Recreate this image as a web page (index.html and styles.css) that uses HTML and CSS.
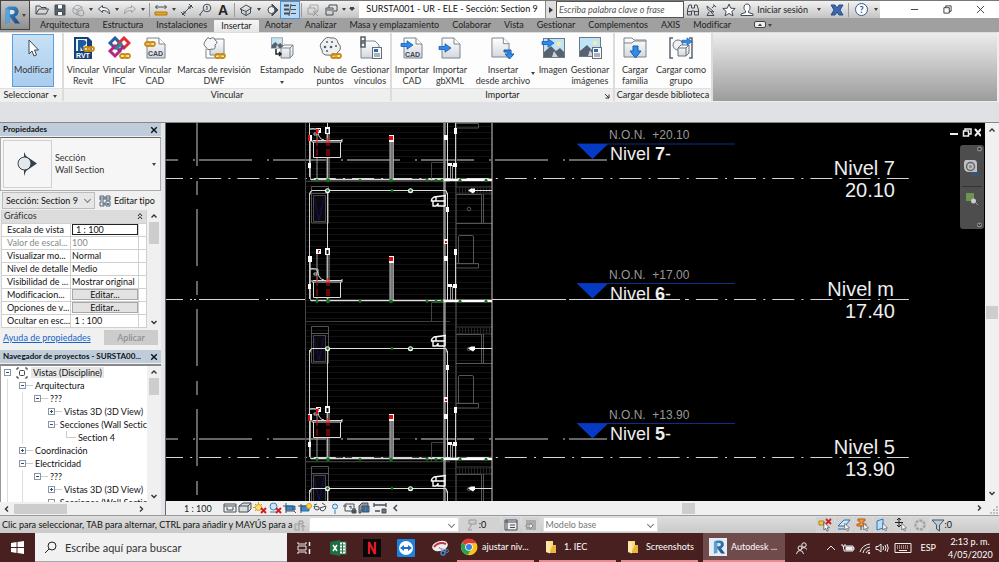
FILE: index.html
```html
<!DOCTYPE html>
<html lang="es">
<head>
<meta charset="utf-8">
<title>SURSTA001 - UR - ELE - Sección: Section 9</title>
<link rel="stylesheet" href="styles.css">
</head>
<body>
<svg class="defs" aria-hidden="true">
  <defs>
    <linearGradient id="rblue" x1="0" y1="0" x2="1" y2="1"><stop offset="0" stop-color="#4a95cf"/><stop offset="1" stop-color="#15487f"/></linearGradient>
    <linearGradient id="sheet" x1="0" y1="0" x2="0" y2="1"><stop offset="0" stop-color="#fff"/><stop offset="1" stop-color="#d4d8dd"/></linearGradient>
    <symbol id="rlogo" viewBox="0 0 20 22"><path d="M3 3L7 1H12C20 1 20 11 14 13L20 21H14L8 13V20L3 21Z" fill="url(#rblue)"/><path d="M8 5H11C15 5 14 10 11 10H8Z" fill="#dce6ef"/><path d="M3 3L8 5V20L3 21Z" fill="#5aa2da"/></symbol>
    <symbol id="chain" viewBox="0 0 12 6"><g fill="none" stroke="#c98a12" stroke-width="1.8"><rect x="1" y="1" width="5.5" height="4" rx="2"/><rect x="5.5" y="1" width="5.5" height="4" rx="2"/></g><path d="M3 3H9" stroke="#f5c242"/></symbol>
    <symbol id="page" viewBox="0 0 20 22"><path d="M1 1H13L19 7V21H1Z" fill="url(#sheet)" stroke="#7b848e"/><path d="M13 1V7H19" fill="#fff" stroke="#7b848e"/></symbol>
    <symbol id="arrow" viewBox="0 0 14 10"><path d="M1 3.5H7V.8L13 5L7 9.2V6.5H1Z" fill="#2d8ceb" stroke="#1a5ba8" stroke-width=".8"/></symbol>
    <symbol id="scene" viewBox="0 0 22 20"><rect x=".5" y=".5" width="21" height="19" fill="#bfe3f7" stroke="#6c7a86"/><circle cx="16" cy="6" r="2.2" fill="#ffe9a0"/><path d="M1 14L8 8L13 13L17 10L21 14V19H1Z" fill="#57626e"/><path d="M9 19L11 13L15 19Z" fill="#cdd3d9"/></symbol>
    <symbol id="card" viewBox="0 0 10 12"><rect x=".5" y=".5" width="9" height="11" fill="#f7f8fa" stroke="#626d79"/><rect x="2" y="2" width="4" height="3" fill="#2b6cb5"/><path d="M2 7H8M2 9H8" stroke="#626d79"/></symbol>
    <symbol id="cursor" viewBox="0 0 8 12"><path d="M1 1V10L3 8L4.5 11.3L6 10.6L4.7 7.5H7.3Z" fill="#fff" stroke="#3a434d" stroke-width=".8"/></symbol>
    <symbol id="plus" viewBox="0 0 7 7"><rect x=".5" y=".5" width="6" height="6" fill="#fff" stroke="#8b96a3"/><path d="M2 3.5H5M3.5 2V5" stroke="#2f4d92"/></symbol>
    <symbol id="minus" viewBox="0 0 7 7"><rect x=".5" y=".5" width="6" height="6" fill="#fff" stroke="#8b96a3"/><path d="M2 3.5H5" stroke="#2f4d92"/></symbol>
    <symbol id="up" viewBox="0 0 8 8"><path d="M1.500 5.500L4 3L6.500 5.500" fill="none" stroke="#333" stroke-width="1.4"/></symbol>
    <symbol id="down" viewBox="0 0 8 8"><path d="M1.500 3L4 5.500L6.500 3" fill="none" stroke="#333" stroke-width="1.4"/></symbol>
    <symbol id="left" viewBox="0 0 8 8"><path d="M5 1.500L2.500 4L5 6.500" fill="none" stroke="#333" stroke-width="1.4"/></symbol>
    <symbol id="right" viewBox="0 0 8 8"><path d="M3 1.500L5.500 4L3 6.500" fill="none" stroke="#333" stroke-width="1.4"/></symbol>
    <symbol id="x" viewBox="0 0 8 8"><path d="M1.200 1.200L6.800 6.800M6.800 1.200L1.200 6.800" fill="none" stroke="currentColor" stroke-width="1.4"/></symbol>
    <symbol id="folder" viewBox="0 0 12 14"><path d="M1 1H8V13L1 12Z" fill="#f8dc83"/><path d="M8 5H11V13H4Z" fill="#e9b73f"/><path d="M1 1L5 3V13.500L1 12Z" fill="#fbe9a9"/></symbol>

    <!-- Fixed architecture, repeated on each storey -->
    <g id="storey">
      <path d="M306 -5.500H450M456 0H492M456 7H492" stroke="#3c3c3c"/>
      <path d="M456 3.500H492" stroke="#262626" stroke-width="6" stroke-dasharray="1 2"/>
      <path d="M311.500 -.5H328.500V36H311.500ZM311 6.500H328M456.500 7.500H481.500V36M456 36.500H492M483.500 7V36" fill="none" stroke="#555"/>
      <rect x="313.500" y="8.500" width="12" height="26" fill="#0a0a0d" stroke="#484848"/>
      <path d="M314 10L319 33L324 10" fill="none" stroke="#10105c"/>
      <circle cx="469" cy="22" r="1.800" fill="none" stroke="#777" stroke-width=".7"/>
      <path d="M458.500 77V49.500Q458.500 48.500 460 48.500H472Q473.500 48.500 473.500 50V76.500M456 76.500H478.500V81H456" fill="none" stroke="#555"/>
      <path d="M431.500 135V115.500H446" fill="none" stroke="#444"/>
    </g>
    <g id="fixtures">
      <path d="M446 8.500L434 10Q431 12 431.500 14H445M433 14V19H436L438 17M445 19H438V16M436 10V14M445 8V19" fill="none" stroke="#fff" stroke-width="1.400"/>
      <path d="M313.500 95H340.500V110.500H313.500Z" fill="#000"/>
      <path d="M313 93.500H342M313.500 95V110.500H340.500V95M342 92V95H312V93M310 82Q317 80 318 86Q319 92 324 93" fill="none" stroke="#ddd"/>
      <path d="M310 82H318V86M314 86h3v2h-3z" fill="none" stroke="#bbb"/>
      <path d="M317 91V99M327 91V99M329 91V99M317 102V109M327 102V109M329 102V109" stroke="#d40d0d"/>
    </g>
    <!-- Electrical risers and outlets, measured from the storey floor -->
    <g id="outlets">
      <path d="M310.500 0V-42M317 -2V-50M327 -2V-50M329 -2V-50M450.500 -1V-15M452.500 -1V-15" stroke="#999"/>
      <rect x="389.500" y="-40" width="4" height="40" fill="#777"/><path d="M390 -40V0M393.500 -40V0" stroke="#bbb" stroke-width=".7"/>
      <path d="M311 -.5H491" stroke="#ddd" stroke-width="1.500"/><path d="M443 0H492" stroke="#fff" stroke-width="2.400"/>
      <path d="M308 -45h4v6h-4zM308 -17h3v5h-3zM389 -45h5v7h-5zM444 -45h4v5h-4zM454 -52h3v6h-3zM448 -17h4v3h-4zM453 -17h4v4h-4zM316 -52h5v5h-5zM325 -53h5v7h-5zM446 -94h3v5h-3zM444 -62h4v5h-4z" fill="#fff"/>
      <path d="M389 -44h4v4h-4zM318 -51h1v3h-1zM445 -60h2v2h-2z" fill="#e20d0d"/>
      <path d="M326.500 -51h2v4h-2zM319 -51h1v1h-1z" fill="#111"/>
      <g fill="#087a10"><circle cx="317" cy=".3" r="1.600"/><circle cx="328" cy=".3" r="2"/><circle cx="360" cy=".3" r="1.500"/><circle cx="391" cy=".3" r="1.900"/><circle cx="427" cy=".3" r="1.500"/><circle cx="436" cy=".3" r="1.500"/><circle cx="442" cy=".3" r="1.500"/><circle cx="460" cy=".3" r="1.500"/><circle cx="486" cy=".3" r="1.500"/></g>
    </g>
    <!-- Ceiling circuit -->
    <g id="ceiling">
      <path d="M310 4Q310 0 313 0H445Q447 0 447 4M473 0H492" fill="none" stroke="#ddd" stroke-width="1.200"/>
      <circle cx="327.500" cy=".3" r="2.500" fill="#fff"/><circle cx="410.500" cy=".3" r="2.500" fill="#fff"/><path d="M468 0l3 -2h4v3l-2 2z" fill="#fff"/>
      <circle cx="327.500" cy="0" r="1.300" fill="#087a10"/><circle cx="392" cy="0" r="1.400" fill="#087a10"/><circle cx="410.500" cy="0" r="1.300" fill="#087a10"/>
    </g>
  </defs>
</svg>

<div class="app">
<header class="top">
  <button class="appbtn" aria-label="Menú de aplicación"><svg width="17" height="22"><use href="#rlogo"/></svg><i class="caret"></i></button>
  <div class="titlebar">
    <div class="qat">
      <button aria-label="Abrir"><svg viewBox="0 0 14 14"><path d="M1 11V3H5L6 4.500H11V6M1 11L4 6H13.500L11 11Z"/></svg></button>
      <button aria-label="Guardar"><svg viewBox="0 0 14 14"><path d="M2 2H12V12H2Z" fill="#59636e"/><path d="M4.500 2V6H9.500V2M4.500 12V8.500H9.500V12" fill="#fff"/></svg></button>
      <button aria-label="Sincronizar" class="dim"><svg viewBox="0 0 14 14"><path d="M2 5L6 2L11 4V9L6 12L2 9ZM2 5L6 7L11 4M6 7V12"/><circle cx="10" cy="10" r="3" fill="#ccc"/></svg></button>
      <i class="caret"></i>
      <button aria-label="Deshacer"><svg viewBox="0 0 14 14"><path d="M1.500 6L5.500 2.500V4.500C10 4.500 12.500 6 12.500 11C10.500 8 8.500 7.500 5.500 7.500V9.500Z" fill="#f4f4f4"/></svg></button>
      <i class="caret"></i>
      <button aria-label="Rehacer" class="dim"><svg viewBox="0 0 14 14"><path d="M12.500 6L8.500 2.500V4.500C4 4.500 1.500 6 1.500 11C3.500 8 5.500 7.500 8.500 7.500V9.500Z"/></svg></button>
      <i class="caret"></i><i class="sep"></i>
      <button aria-label="Medir"><svg viewBox="0 0 14 14"><path d="M1.500 4H12.500M3.500 2L1.500 4L3.500 6M10.500 2L12.500 4L10.500 6"/><path d="M1 9H13V12H1Z" fill="#eaa521" stroke="#b3770b"/></svg></button>
      <i class="caret"></i>
      <button aria-label="Cota alineada"><svg viewBox="0 0 14 14"><path d="M2 12L12 2M1 9L5 13M9 1L13 5M4 8V10H6M8 4H10V6"/></svg></button>
      <button aria-label="Etiqueta"><svg viewBox="0 0 14 14"><circle cx="9" cy="5" r="3.800"/><path d="M9 3V7M8 4L9 3M5.500 7L1.500 12M1.500 12H3"/></svg></button>
      <button aria-label="Texto" class="txt">A</button>
      <i class="sep"></i>
      <button aria-label="Vista 3D"><svg viewBox="0 0 14 14"><path d="M1 6L7 2L12.500 5M2.500 6V10L7 12.500L11.500 10V5M1 6L7 8.500L12.500 5M7 8.500V12.500"/></svg></button>
      <i class="caret"></i>
      <button aria-label="Sección"><svg viewBox="0 0 14 14"><path d="M7 1L13 7L7 13Z" fill="#424c57"/><circle cx="6.500" cy="7" r="3.500" fill="#eee"/></svg></button>
      <button aria-label="Líneas finas" class="on"><svg viewBox="0 0 14 14"><path d="M1 2.500H6M1 6.500H6M1 10.500H6" stroke-width="2"/><path d="M8 2.500H13M8 6.500H13M8 10.500H13M8 1L6 13"/></svg></button>
      <i class="sep"></i>
      <button aria-label="Cerrar ocultas" class="dim"><svg viewBox="0 0 14 14"><path d="M4 5V2H12V8H10M2 5H9V11H2ZM7 8L12 13M12 8L7 13"/></svg></button>
      <button aria-label="Cambiar ventanas"><svg viewBox="0 0 14 14"><path d="M5 5V2H13V8H10M2 5H9V12H2ZM3 7H8"/></svg></button>
      <i class="caret"></i><i class="caret bar"></i>
    </div>
    <h1>SURSTA001 - UR - ELE - Sección: Section 9</h1>
    <button class="expand" aria-label="Expandir"><svg width="4" height="8" viewBox="0 0 4 8"><path d="M0 1L4 4L0 7Z" fill="#333"/></svg></button>
    <input class="find" type="text" placeholder="Escriba palabra clave o frase" aria-label="Buscar ayuda">
    <div class="info">
      <button aria-label="Buscar"><svg viewBox="0 0 14 14"><path d="M1.500 12V7L3 2H5.500V5H8.500V2H11L12.500 7V12H8.500V8H5.500V12ZM1.500 8.500H5.500M8.500 8.500H12.500"/></svg></button>
      <button aria-label="Comunicación"><svg viewBox="0 0 14 14"><path d="M3 3Q3 9 10 9L3 3M5 9L3 12.500H10L7 9M8 5L11 2M9 1.500L12 4"/></svg></button>
      <button aria-label="Favoritos"><svg viewBox="0 0 14 14"><path d="M7 1L8.700 5.200L13.200 5.500L9.800 8.400L11 12.800L7 10.400L3 12.800L4.200 8.400L.8 5.500L5.300 5.200Z" fill="#fff"/></svg></button>
      <button class="login"><svg viewBox="0 0 14 14"><path d="M7 1C3 1 3.500 7 5.500 8V9.500L1 11V12.500H13V11L8.500 9.500V8C10.500 7 11 1 7 1Z" fill="#fff"/></svg>Iniciar sesión</button>
      <i class="caret wide"></i>
      <button aria-label="Exchange"><svg viewBox="0 0 14 14"><path d="M1 2H5L7 5L9 2H13L10 7L13 12H9L7 9L5 12H1L4 7Z" fill="#3e69ad" stroke="#294d87"/></svg></button>
      <i class="sep"></i>
      <button aria-label="Ayuda" class="help">?</button>
      <i class="caret"></i>
    </div>
    <div class="win">
      <button aria-label="Minimizar"><svg viewBox="0 0 10 10"><path d="M1 5H9"/></svg></button>
      <button aria-label="Restaurar"><svg viewBox="0 0 10 10"><path d="M3 3V1H9V7H7M1 3H7V9H1Z"/></svg></button>
      <button aria-label="Cerrar"><svg viewBox="0 0 10 10"><path d="M1 1L9 9M9 1L1 9"/></svg></button>
    </div>
  </div>
  <nav class="tabs">
    <a href="#">Arquitectura</a><a href="#">Estructura</a><a href="#">Instalaciones</a><a href="#" class="active">Insertar</a><a href="#">Anotar</a><a href="#">Analizar</a><a href="#">Masa y emplazamiento</a><a href="#">Colaborar</a><a href="#">Vista</a><a href="#">Gestionar</a><a href="#">Complementos</a><a href="#">AXIS</a><a href="#">Modificar</a>
    <button class="ribtoggle" aria-label="Minimizar cinta"><svg width="12" height="8" viewBox="0 0 12 8"><rect x=".5" y=".5" width="11" height="6" rx="1.500" fill="#eee" stroke="#444"/><path d="M4 5L6 2.500L8 5Z" fill="#333"/></svg></button><i class="caret"></i>
  </nav>
</header>

<section class="ribbon">
  <div class="panel p-sel">
    <div class="tools"><button class="tool pressed"><svg viewBox="0 0 24 24"><path d="M8 4V18L11 15L13 20L15.500 19L13.500 14H17.500Z" fill="#fff" stroke="#3d4752"/></svg><span>Modificar</span></button></div>
    <footer>Seleccionar <i class="caret"></i></footer>
  </div>
  <div class="panel p-link">
    <div class="tools">
      <button class="tool w36"><svg viewBox="0 0 24 24"><path d="M3 1H17L21 5V23H3Z" fill="#173f78"/><path d="M5 3H16V15H5Z" fill="#e9f1f9"/><path d="M7 4H12C17 4 16 10 12 10L15 15H12L9.500 11V15H7Z" fill="#1c5aa0"/><text x="5" y="21.500" class="t6 inv">RVT</text><use href="#chain" x="12" y="10" width="12" height="6"/></svg><span>Vincular<br>Revit</span></button>
      <button class="tool w36"><svg viewBox="0 0 24 24"><g fill="none" stroke-width="3"><path d="M3 7L8 2L13 7L8 12Z" stroke="#2a5e9d"/><path d="M12 7L17 2L22 7L17 12Z" stroke="#e0313b"/><path d="M3 15L8 10L13 15L8 20Z" stroke="#b72680"/><path d="M9 13L15 7" stroke="#2b8b9b"/><path d="M12 15L17 10" stroke="#8b3191"/></g><use href="#chain" x="12" y="17" width="12" height="6"/></svg><span>Vincular<br>IFC</span></button>
      <button class="tool w36"><svg viewBox="0 0 24 24"><use href="#page" x="3" y="1" width="20" height="22"/><text x="5" y="20" class="t6">CAD</text><use href="#chain" x="1" y="5" width="12" height="6"/></svg><span>Vincular<br>CAD</span></button>
      <button class="tool w82"><svg viewBox="0 0 24 24"><path d="M8 3H22V19H8Z" fill="url(#sheet)" stroke="#7b848e"/><path d="M4 4Q6 0 8 3Q12 0 13 4Q17 6 13 9Q14 14 10 13Q5 15 4 11Q0 9 4 4Z" fill="#f5f6f8" stroke="#69737e"/><path d="M4 13V22H16" fill="none" stroke="#7b848e"/><use href="#chain" x="12" y="17" width="12" height="6"/></svg><span>Marcas de revisión<br>DWF</span></button>
      <button class="tool w54"><svg viewBox="0 0 24 24"><use href="#scene" x="1" y="1" width="12" height="12"/><path d="M11 12L14 9H23V19L20 22H11Z" fill="url(#sheet)" stroke="#7b848e"/><path d="M11 12H20V22M20 12L23 9" fill="none" stroke="#7b848e"/><path d="M6 13V18H11M9 16L11 18L9 20" fill="none" stroke="#222" stroke-width="1.500"/></svg><span>Estampado<br><i class="caret"></i></span></button>
      <button class="tool w42"><svg viewBox="0 0 24 24"><path d="M5 5Q8 0 13 2Q19 1 20 7Q25 12 20 16Q16 22 11 19Q4 20 4 14Q0 9 5 5Z" fill="#eef0f2" stroke="#626c77"/><g fill="#555f69"><circle cx="9" cy="6" r="1"/><circle cx="14" cy="6" r="1"/><circle cx="7" cy="11" r="1.300"/><circle cx="13" cy="11" r="1.300"/><circle cx="18" cy="10" r="1"/><circle cx="9" cy="15" r="1"/></g><use href="#chain" x="12" y="17" width="12" height="6"/></svg><span>Nube de<br>puntos</span></button>
      <button class="tool w38"><svg viewBox="0 0 24 24"><path d="M3 22V5H17L21 9V22Z" fill="url(#sheet)" stroke="#7b848e"/><path d="M3 1H7V7H3ZM3 5H7V11H3Z" fill="none" stroke="#555f69" stroke-width="1.500"/><use href="#card" x="14" y="11" width="10" height="12"/></svg><span>Gestionar<br>vínculos</span></button>
    </div>
    <footer>Vincular</footer>
  </div>
  <div class="panel p-imp">
    <div class="tools">
      <button class="tool w38"><svg viewBox="0 0 24 24"><use href="#page" x="3" y="1" width="20" height="22"/><text x="5" y="21" class="t6">CAD</text><use href="#arrow" x="0" y="4" width="14" height="10"/></svg><span>Importar<br>CAD</span></button>
      <button class="tool w38"><svg viewBox="0 0 24 24"><use href="#page" x="3" y="1" width="20" height="22"/><use href="#arrow" x="0" y="7" width="14" height="10"/></svg><span>Importar<br>gbXML</span></button>
      <button class="tool w68"><svg viewBox="0 0 24 24"><use href="#page" x="0" y="1" width="19" height="21"/><path d="M13 14H20V18H23L18.500 23L14 18H17V16H13Z" fill="#2d8ceb" stroke="#1a5ba8"/></svg><span>Insertar<br>desde archivo</span><i class="caret corner"></i></button>
      <button class="tool w32"><svg viewBox="0 0 24 24"><use href="#scene" x="2" y="2" width="22" height="20"/><use href="#arrow" x="0" y="2" width="14" height="10"/></svg><span>Imagen</span></button>
      <button class="tool w42"><svg viewBox="0 0 24 24"><use href="#scene" x="1" y="1" width="22" height="20"/><use href="#card" x="14" y="11" width="10" height="12"/></svg><span>Gestionar<br>imágenes</span></button>
    </div>
    <footer>Importar<svg class="launch" viewBox="0 0 6 6"><path d="M1 1L5 5M5 1.500V5H1.500" fill="none" stroke="#333"/></svg></footer>
  </div>
  <div class="panel p-load">
    <div class="tools">
      <button class="tool w38"><svg viewBox="0 0 24 24"><path d="M1 21V2H9L11 4H23V21Z" fill="url(#sheet)" stroke="#7b848e"/><path d="M1 7H9L11 5H23" fill="none" stroke="#7b848e"/><path d="M10 10H15V15H18L12.500 22L7 15H10Z" fill="#2d8ceb" stroke="#1a5ba8"/></svg><span>Cargar<br>familia</span></button>
      <button class="tool w54"><svg viewBox="0 0 24 24"><path d="M4 2H1V22H4M20 2H23V22H20" fill="none" stroke="#59636e" stroke-width="1.500"/><circle cx="9" cy="9" r="5" fill="#eef0f2" stroke="#6a747f"/><path d="M9 12L12 9H20V17L17 20H9Z" fill="url(#sheet)" stroke="#6a747f"/><path d="M9 12H17V20M17 12L20 9" fill="none" stroke="#6a747f"/><use href="#arrow" x="12" y="1" width="12" height="9"/></svg><span>Cargar como<br>grupo</span></button>
    </div>
    <footer>Cargar desde biblioteca</footer>
  </div>
</section>
<div class="options"></div>

<main class="work">
  <aside class="side">
    <section class="props">
      <header class="dock"><h2>Propiedades</h2><button aria-label="Cerrar propiedades"><svg width="8" height="8"><use href="#x"/></svg></button></header>
      <button class="type"><span class="thumb"><svg width="22" height="26" viewBox="0 0 22 26"><path d="M7 1L9 5L20 12.500L9 20L7 25Z" fill="#34404b"/><circle cx="7.500" cy="12.500" r="6.500" fill="#e4e8ed" stroke="#34404b"/></svg></span><span class="tname">Sección<br>Wall Section</span><i class="caret"></i></button>
      <div class="inst">
        <span class="pick"><select aria-label="Instancia"><option>Sección: Section 9</option></select></span>
        <button><svg width="12" height="12" viewBox="0 0 12 12"><path d="M1 1H5V5H1ZM7 1H11V5H7ZM1 7H5V11H1ZM1 3H11M3 9H7M7 6H11V11H7Z" fill="#e8f1fa" stroke="#56616d"/><path d="M8 8H10V10H8Z" fill="#2d7fd0"/></svg>Editar tipo</button>
      </div>
      <div class="gridwrap">
        <table class="grid">
          <thead><tr><th colspan="3" scope="colgroup">Gráficos<svg viewBox="0 0 6 8"><path d="M1 4L3 1.500L5 4M1 7L3 4.500L5 7" fill="none" stroke="#222"/></svg></th></tr></thead>
          <tbody>
            <tr><td>Escala de vista</td><td><input value="1 : 100" aria-label="Escala de vista"></td><td></td></tr>
            <tr class="off"><td>Valor de escal...</td><td>100</td><td></td></tr>
            <tr><td>Visualizar mo...</td><td>Normal</td><td></td></tr>
            <tr><td>Nivel de detalle</td><td>Medio</td><td></td></tr>
            <tr><td>Visibilidad de ...</td><td>Mostrar original</td><td></td></tr>
            <tr><td>Modificacion...</td><td><button>Editar...</button></td><td></td></tr>
            <tr><td>Opciones de v...</td><td><button>Editar...</button></td><td></td></tr>
            <tr><td>Ocultar en esc...</td><td>&nbsp;1 : 100</td><td></td></tr>
          </tbody>
        </table>
        <div class="vscroll"><svg><use href="#up"/></svg><i class="thumbv"></i><svg><use href="#down"/></svg></div>
      </div>
      <div class="apply"><a href="#">Ayuda de propiedades</a><button disabled>Aplicar</button></div>
    </section>
    <section class="nav">
      <header class="dock"><h2>Navegador de proyectos - SURSTA00...</h2><button aria-label="Cerrar navegador"><svg width="8" height="8"><use href="#x"/></svg></button></header>
      <div class="treewrap">
        <ul class="tree">
          <li class="l0"><svg><use href="#minus"/></svg><svg class="vi" viewBox="0 0 12 12"><path d="M3 1H1V3M9 1H11V3M1 9V11H3M11 9V11H9" fill="none" stroke="#333"/><rect x="3.500" y="3.500" width="5" height="5" rx="1" fill="#fff" stroke="#444"/></svg><span class="sel">Vistas (Discipline)</span></li>
          <li class="l1"><svg><use href="#minus"/></svg><i></i><span>Arquitectura</span></li>
          <li class="l2"><svg><use href="#minus"/></svg><i></i><span>???</span></li>
          <li class="l3"><svg><use href="#plus"/></svg><i></i><span>Vistas 3D (3D View)</span></li>
          <li class="l3"><svg><use href="#minus"/></svg><i></i><span>Secciones (Wall Sectic</span></li>
          <li class="l4"><i></i><span>Section 4</span></li>
          <li class="l1"><svg><use href="#plus"/></svg><i></i><span>Coordinación</span></li>
          <li class="l1"><svg><use href="#minus"/></svg><i></i><span>Electricidad</span></li>
          <li class="l2"><svg><use href="#minus"/></svg><i></i><span>???</span></li>
          <li class="l3"><svg><use href="#plus"/></svg><i></i><span>Vistas 3D (3D View)</span></li>
          <li class="l3"><svg><use href="#minus"/></svg><i></i><span>Secciones (Wall Sectic</span></li>
        </ul>
        <div class="vscroll"><svg><use href="#up"/></svg><i class="thumbv short"></i><svg><use href="#down"/></svg></div>
      </div>
      <div class="hscroll"><svg><use href="#left"/></svg><i></i><svg><use href="#right"/></svg></div>
    </section>
  </aside>

  <section class="view">
    <div class="viewtop">
      <div class="stage">
        <svg class="drawing" viewBox="166 123 819 378" role="img" aria-label="Sección de edificio con niveles">
          <defs><pattern id="courses" width="8" height="6" patternUnits="userSpaceOnUse"><path d="M0 .5H8" stroke="#121212"/></pattern></defs>
          <rect x="306" y="123" width="186" height="378" fill="url(#courses)"/>
          <path d="M197 109V501" stroke="#858585" stroke-width="1.500" stroke-dasharray="57 15 14 14"/>
          <path d="M125 160H607" stroke="#8a8a8a" stroke-width="1.500" stroke-dasharray="53 15 2 4"/>
          <path d="M125 439H607" stroke="#ccc" stroke-dasharray="53 15 2 4"/>
          <g stroke="#d5d5d5" stroke-dasharray="22 7.200 2 7"><path d="M161 178.500H909"/><path d="M161 457.500H909"/><path d="M619.500 299.500H909"/></g>
          <path d="M166 299.500H183M190 299.500H192M194 299.500H196M199 299.500H259M266 299.500H268M270 299.500H306M492 299.500H566M569 299.500H680M685 299.500H687" stroke="#d5d5d5"/>
          <path d="M305.500 123V501" stroke="#444"/><path d="M456 123V501" stroke="#333" stroke-width="2"/>
          <use href="#storey" y="47"/><use href="#storey" y="187"/><use href="#storey" y="327"/><use href="#storey" y="467"/>
          <path d="M309.500 123V177M309.500 193V299M309.500 350V457M309.500 490V501M327.500 123V179M327.500 190V300M327.500 348V458M327.500 488V501M455.500 123V179M455.500 252V300M455.500 408V458" stroke="#ccc"/>
          <path d="M447.500 123V179M447.500 193V300M447.500 351V458M447.500 491V501" stroke="#ddd"/>
          <path d="M444.500 123V501" stroke="#8c8c8c" stroke-width="2.500"/>
          <path d="M492 123V501" stroke="#ccc"/>
          <use href="#outlets" y="180"/><use href="#outlets" y="301"/><use href="#outlets" y="459"/>
          <use href="#ceiling" y="190.500"/><use href="#ceiling" y="348.500"/><use href="#ceiling" y="488.500"/>
          <use href="#fixtures" y="47"/><use href="#fixtures" y="187"/><use href="#fixtures" y="327"/><use href="#fixtures" y="467"/>
          <path d="M308 135h2v6h-2zM308 415h2v6h-2zM316 129h2v5h-2zM316 409h2v5h-2z" fill="#e20d0d"/>
          <g stroke="#0c2e88"><path d="M577 144H735M577 283.500H735M577 423.500H735"/></g>
          <path d="M577 144H608L592.500 159ZM577 283.500H608L592.500 298.500ZM577 423.500H608L592.500 438.500Z" fill="#053bc4"/>
          <g class="elev"><text x="609" y="138.500">N.O.N.&#160; +20.10</text><text x="609" y="278.500">N.O.N.&#160; +17.00</text><text x="609" y="418.500">N.O.N.&#160; +13.90</text></g>
          <g class="lvl"><text x="610" y="160">Nivel <tspan>7</tspan>-</text><text x="610" y="300">Nivel <tspan>6</tspan>-</text><text x="610" y="440">Nivel <tspan>5</tspan>-</text></g>
          <g class="lvlr"><text x="895" y="174.500">Nivel 7</text><text x="895" y="196.500">20.10</text><text x="894" y="296">Nivel m</text><text x="895" y="318">17.40</text><text x="895" y="453.500">Nivel 5</text><text x="895" y="475.500">13.90</text></g>
        </svg>
        <div class="mdi"><svg width="31" height="9" viewBox="0 0 31 9"><path d="M0 6H8" stroke="#eee" stroke-width="2"/><path d="M15 3V1H21V6H19M13.500 3H18.500V8H13.500Z" fill="none" stroke="#eee" stroke-width="1.500"/><path d="M25 1L31 8M31 1L25 8" stroke="#eee" stroke-width="2"/></svg></div>
        <div class="navbar"><svg width="24" height="84" viewBox="0 0 24 84"><rect width="24" height="84" rx="3" fill="#4d4d4d"/><circle cx="19.500" cy="4" r="2.500" fill="#888"/><path d="M18.500 3L20.500 5M20.500 3L18.500 5" stroke="#222"/><path d="M6 15H14Q17 15 17 19V27H9Q4 27 4 22V19Q4 15 6 15Z" fill="#bfc1c4"/><circle cx="10.500" cy="21.500" r="4" fill="none" stroke="#666" stroke-width="1.500"/><circle cx="10.500" cy="21.500" r="1.500" fill="#888"/><text x="12" y="31" class="t2d">2D</text><path d="M2 41.500H22" stroke="#333"/><rect x="6" y="48" width="8" height="8" fill="#6a944f"/><circle cx="13.500" cy="56" r="2.500" fill="#ccc"/><path d="M15 57L18 60" stroke="#999"/><circle cx="19.500" cy="80" r="2.500" fill="#888"/><path d="M18 79L19.500 81L21 79" fill="none" stroke="#222"/></svg></div>
      </div>
      <div class="vscroll main"><svg><use href="#up"/></svg><i class="thumbv mid"></i><svg><use href="#down"/></svg></div>
    </div>
    <div class="viewbar">
      <span class="scale">1 : 100</span>
      <div class="vicons">
        <svg viewBox="0 0 14 12"><path d="M1 2H13V10H1ZM1 4H13M4 5V8H10V5" /></svg>
        <svg viewBox="0 0 14 12"><path d="M1 4L5 1H13V7L10 10H1ZM1 4H10V10M10 4L13 1" fill="#ddd"/></svg>
        <svg viewBox="0 0 14 12"><circle cx="5.500" cy="5.500" r="3" fill="#ffe27a" stroke="#d99a12"/><path d="M5.500 0V2M0 5.500H2M2 2L3 3M9 2L8 3M2 9L3 8" stroke="#d99a12"/><path d="M8 6L13 11M13 6L8 11" stroke="#d11f1f" stroke-width="2"/></svg>
        <svg viewBox="0 0 14 12"><circle cx="5.500" cy="4.500" r="3.500" fill="#cfe6f8" stroke="#3d7fb8"/><path d="M2 10H8" stroke="#3d7fb8"/><path d="M8 6L13 11M13 6L8 11" stroke="#d11f1f" stroke-width="2"/></svg>
        <svg viewBox="0 0 14 12"><path d="M3 4H12V8H3Z" fill="#3d88cf" stroke="#2b6cb0"/><path d="M0 4H10V8M3 1V11M3 9H11"/><path d="M11 9L13 11" stroke="#d11f1f"/></svg>
        <svg viewBox="0 0 14 12"><path d="M3 4H11V9H3Z" fill="#3d88cf" stroke="#2b6cb0"/><path d="M0 4H10M3 2V11"/><circle cx="11" cy="4" r="2.500" fill="#ffd94e" stroke="#d99a12"/></svg>
        <svg viewBox="0 0 14 12"><path d="M1 3L4 2M9 1L12 3M1 4Q1 8 4 8Q7 8 6 5ZM7 6Q7 9 10 9Q13 8 13 4Z"/></svg>
        <svg viewBox="0 0 14 12"><circle cx="7" cy="4.500" r="2.500" fill="#d6ebfa" stroke="#2e7cc0"/><path d="M6 9H8M6 11H8" stroke="#2e7cc0"/></svg>
        <svg viewBox="0 0 14 12"><path d="M2 2H11V9H2ZM0 4H4M9 7H13M6 5L8 4V7"/><path d="M9 8H13V11H9Z" fill="#555"/></svg>
        <svg viewBox="0 0 14 12"><path d="M1 4L4 1H10V8H3V11H1Z" fill="#999"/><path d="M4 4H11V10H4Z" fill="#3d88cf"/><path d="M6 4V10M9 4V10"/></svg>
        <svg viewBox="0 0 14 12"><path d="M1 1V5M13 1V5M1 3H13M2 9H7" stroke-width="1.300"/><path d="M9 7H13V11H9Z" fill="#777"/></svg>
        <svg viewBox="0 0 14 12"><path d="M9 3L6 6L9 9" stroke-width="1.500"/></svg>
      </div>
      <div class="htrack"><i></i></div>
      <svg class="harrow" width="8" height="8"><use href="#right"/></svg>
      <svg width="12" height="12" viewBox="0 0 12 12"><path d="M9 5h2M6 8h2M9 8h2M3 11h2M6 11h2M9 11h2" stroke="#b0b0b0" stroke-width="1.500"/></svg>
    </div>
  </section>
</main>

<div class="status">
  <p>Clic para seleccionar, TAB para alternar, CTRL para añadir y MAYÚS para a</p>
  <svg class="worksets" viewBox="0 0 14 14"><path d="M1 6H5V12H1ZM5 3H9V6H5ZM9 13V7M7 9L9 7L11 9" fill="#ccc" stroke="#999"/></svg>
  <span class="pick ws"><select aria-label="Subproyecto"><option></option></select></span>
  <span class="cell"><svg viewBox="0 0 14 14"><path d="M4 2H11V6H4ZM7 6L3 12H7" fill="#ccc" stroke="#999"/></svg>:0</span>
  <button class="cell sq" aria-label="Opciones de diseño"><svg viewBox="0 0 14 14"><path d="M1 2H13V12H1ZM1 4H13M3 2V12M6 7H11M6 9.500H11" fill="#eee" stroke="#424b55"/></svg></button>
  <button class="cell sq" aria-label="Excluir opciones"><svg viewBox="0 0 14 14"><path d="M2 2H12V12H2Z" fill="#aaa"/><path d="M2 7H6V5L9 8L6 11V9H2Z" fill="#eee" stroke="#888"/></svg></button>
  <span class="pick dm"><select aria-label="Opción de diseño"><option>Modelo base</option></select></span>
  <div class="sels">
    <button class="cell" aria-label="Seleccionar vínculos"><svg viewBox="0 0 14 14"><path d="M1 3H6V7H1Z" fill="#f0c23d" stroke="#b98312"/><path d="M8 1L13 6M13 1L8 6" stroke="#d11f1f" stroke-width="1.800"/><use href="#cursor" x="5" y="3" width="7" height="11"/></svg></button>
    <button class="cell" aria-label="Seleccionar base"><svg viewBox="0 0 14 14"><path d="M1 8L7 2H13L8 8ZM1 11H7" fill="#d4e7f8" stroke="#2c6db0"/><use href="#cursor" x="7" y="4" width="6" height="10"/></svg></button>
    <button class="cell" aria-label="Seleccionar bloqueados"><svg viewBox="0 0 14 14"><path d="M2 1H9V3H7V6H10V8H1V6H4V3H2Z" fill="#f29a3d" stroke="#b85d12"/><path d="M5 8V12" stroke="#555"/><use href="#cursor" x="7" y="4" width="6" height="10"/></svg></button>
    <button class="cell" aria-label="Seleccionar por cara"><svg viewBox="0 0 14 14"><path d="M2 3L8 1V10L2 12Z" fill="#b9dcf7" stroke="#2678c0"/><use href="#cursor" x="7" y="4" width="6" height="10"/></svg></button>
    <button class="cell" aria-label="Arrastrar"><svg viewBox="0 0 14 14"><path d="M5 0V9M1 4.500H9" stroke="#222"/><path d="M3 2L5 0L7 2M3 7L5 9L7 7" fill="none" stroke="#222"/><use href="#cursor" x="7" y="4" width="6" height="10"/></svg></button>
    <button class="cell" aria-label="Procesos"><svg viewBox="0 0 14 14"><circle cx="7" cy="7" r="4.500" fill="none" stroke="#a5a5a5" stroke-width="2.500" stroke-dasharray="3 1"/></svg></button>
    <button class="flt"><svg viewBox="0 0 14 14"><path d="M1 2H13L8.500 7V13L5.500 11V7Z" fill="#b9cad9" stroke="#46525e"/></svg>:0</button>
  </div>
</div>

<footer class="taskbar">
  <button class="start" aria-label="Inicio"><svg width="13" height="13" viewBox="0 0 13 13"><path d="M0 2L5.500 1V6H0ZM6.500 1L13 0V6H6.500ZM0 7H5.500V12L0 11ZM6.500 7H13V13L6.500 12Z" fill="#fff"/></svg></button>
  <label class="search"><svg width="13" height="13" viewBox="0 0 13 13"><circle cx="8" cy="5" r="4" fill="none" stroke="#222"/><path d="M5 8L1 12" stroke="#222"/></svg><input placeholder="Escribe aquí para buscar" aria-label="Buscar en Windows"></label>
  <div class="pins">
    <button aria-label="Vista de tareas"><svg viewBox="0 0 18 18"><path d="M3 3V5H11V3M3 15V13H11V15M3 7H11V11H3Z" fill="none" stroke="#eee"/><path d="M14.500 3V7M14.500 10V15" stroke="#eee" stroke-width="1.500"/></svg></button>
    <button aria-label="Excel"><svg viewBox="0 0 18 18"><rect x="9" y="3" width="8" height="12" fill="#fff" stroke="#217346"/><path d="M11 6H16M11 9H16M11 12H16M13.500 4V14" stroke="#217346"/><path d="M1 3L11 1V17L1 15Z" fill="#1d7044"/><path d="M4 6L8 12M8 6L4 12" stroke="#fff" stroke-width="1.500"/></svg></button>
    <button aria-label="Netflix"><svg viewBox="0 0 18 18"><rect width="18" height="18" fill="#080808"/><path d="M6 15V3L12 15V3" fill="none" stroke="#e01b24" stroke-width="2.200"/></svg></button>
    <button aria-label="TeamViewer"><svg viewBox="0 0 18 18"><rect width="18" height="18" rx="1" fill="#1a82e0"/><circle cx="9" cy="9" r="7" fill="#fff"/><path d="M3 9L7 6V8H11V6L15 9L11 12V10H7V12Z" fill="#1a72cc"/></svg></button>
    <button aria-label="Recortes"><svg viewBox="0 0 18 18"><ellipse cx="9" cy="7" rx="8" ry="5" fill="#eee" transform="rotate(-15 9 7)"/><path d="M3 8Q8 2 15 5" stroke="#c8333d" stroke-width="2" fill="none"/><circle cx="12" cy="14" r="2" fill="none" stroke="#3d8cd6" stroke-width="1.500"/><circle cx="16" cy="12" r="1.500" fill="none" stroke="#3d8cd6"/><path d="M12 12L8 8M15 11L8 9" stroke="#999"/></svg></button>
  </div>
  <div class="tasks">
    <button><svg viewBox="0 0 18 18"><circle cx="9" cy="9" r="8" fill="#fff"/><path d="M9 9L2 5A8 8 0 0 1 16.500 5.500H9Z" fill="#e33b2e"/><path d="M9 9L2 5A8 8 0 0 0 8 17L12 11Z" fill="#2ba24c"/><path d="M9 5.500H16.500A8 8 0 0 1 8 17L12.500 9Z" fill="#fbc116"/><circle cx="9" cy="9" r="3.800" fill="#fff"/><circle cx="9" cy="9" r="3" fill="#3f7de8"/></svg><span>ajustar niv...</span></button>
    <button><svg viewBox="0 0 18 18"><use href="#folder" x="3" y="2" width="12" height="14"/></svg><span>1. IEC</span></button>
    <button><svg viewBox="0 0 18 18"><use href="#folder" x="3" y="2" width="12" height="14"/></svg><span>Screenshots</span></button>
    <button class="cur"><svg viewBox="0 0 18 18"><rect width="18" height="18" fill="#e6ecf3"/><use href="#rlogo" x="3" y="1" width="13" height="16"/></svg><span>Autodesk ...</span></button>
  </div>
  <div class="tray">
    <svg viewBox="0 0 14 14"><circle cx="9" cy="4" r="2.200"/><path d="M6 8Q9 5 12 8.500"/><circle cx="5" cy="7" r="2"/><path d="M1.500 13Q2 9.500 5 9.500Q8 9.500 8.500 13"/></svg>
    <svg class="chev" viewBox="0 0 14 14"><path d="M3 9L7 5L11 9"/></svg>
    <svg viewBox="0 0 14 14"><path d="M4 5H12V10H3V8M12 6.500H13V8.500H12M1 3V5H4V3M2.500 5V8"/><path d="M5 6H11V9H5Z" fill="#eee"/></svg>
    <svg viewBox="0 0 14 14"><path d="M2 11Q4 4 12 3M5 12Q6 7 12 6M8 12Q9 9 12 9"/><circle cx="11" cy="12" r=".8" fill="#fff"/></svg>
    <svg viewBox="0 0 14 14"><path d="M1 5.500H3L6 3V11L3 8.500H1ZM8 5Q9 7 8 9M10 4Q12 7 10 10M12 3Q14.500 7 12 11"/></svg>
    <svg class="kb" viewBox="0 0 18 12"><path d="M1 1.500H17V10.500H1Z"/><path d="M3 4H15M3 6H15" stroke-dasharray="1 1"/><path d="M5 8.500H13"/></svg>
    <span>ESP</span>
    <time>2:13 p. m.<br>4/05/2020</time>
  </div>
</footer>
</div>
</body>
</html>
```
FILE: styles.css
```css
* { box-sizing: border-box; }
body { margin: 0; font: 9px/11px Lato, "Liberation Sans", sans-serif; font-variant-ligatures: none; color: #222; }
button, input, select { font: inherit; font-variant-ligatures: none; color: inherit; border: 0; padding: 0; margin: 0; background: none; border-radius: 0; }
h1, h2, p, ul { margin: 0; padding: 0; font-size: inherit; font-weight: 400; list-style: none; }
a { color: inherit; text-decoration: none; }
svg { display: block; flex: none; }
.defs { position: absolute; width: 0; height: 0; }
.app { height: 100vh; display: flex; flex-direction: column; background: #dfe1e4; overflow: hidden; }
.caret { width: 8px; flex: none; display: inline-flex; justify-content: center; align-items: center; }
.caret::after { content: ""; border: 2px solid transparent; border-top: 3px solid #444; border-bottom: 0; }
.caret.bar::after { border-width: 3px 3px 0; box-shadow: 0 -2px 0 -1px #444; }
.sep { width: 1px; height: 14px; margin: 0 2px; background: #999; flex: none; }

.top { display: grid; grid-template-columns: 30px 1fr; grid-template-rows: 18px 14px; background: #a0a0a0; flex: none; }
.appbtn { grid-row: 1 / 3; display: flex; align-items: center; justify-content: center; background: linear-gradient(#c6c6c6, #8f8f8f); border: 1px solid #444; height: 30px; }
.titlebar { display: flex; align-items: stretch; background: #fff; border-top: 1px solid #777; }
.qat, .info { display: flex; align-items: center; background: linear-gradient(#f2f2f2, #c4c4c4); flex: none; }
.qat { padding: 0 3px; }
.qat button, .info button { width: 18px; height: 16px; display: flex; align-items: center; justify-content: center; flex: none; }
.qat svg, .info svg { width: 14px; height: 14px; fill: none; stroke: #424c57; }
.qat .dim { opacity: .4; }
.qat .on { background: #b9d8f3; outline: 1px solid #4b93d5; }
.qat .txt { font: 700 14px/16px "Liberation Sans", sans-serif; }
.titlebar h1 { flex: 0 0 186px; text-align: center; line-height: 16px; color: #111; white-space: nowrap; }
.expand { width: 11px; background: #ddd; border-left: 1px solid #888; display: flex; align-items: center; justify-content: center; }
.find { flex: 1 1 120px; min-width: 60px; border: 1px solid #555; background: #fff; font-style: italic; padding: 0 2px; }
.find::placeholder { color: #555; opacity: 1; }
.info .login { width: auto; gap: 3px; padding: 0 2px; color: #222; }
.info .wide { width: 18px; }
.info .help { width: 13px; height: 13px; margin: 0 4px; border: 1px solid #37598f; border-radius: 50%; background: #fff; color: #1b4f9c; font-weight: 700; line-height: 11px; }
.win { display: flex; }
.win button { width: 33px; display: flex; align-items: center; justify-content: center; }
.win button:first-child { margin-left: 18px; }
.win button:last-child { margin-right: 2px; }
.win svg { width: 9px; height: 9px; fill: none; stroke: #333; }
.tabs { display: flex; padding-left: 4px; align-items: stretch; }
.tabs a { padding: 0 7px 0 6px; line-height: 14px; white-space: nowrap; }
.tabs .active { background: linear-gradient(#f6f6f6, #e6e6e6); padding: 0 7px; margin-top: 2px; line-height: 11px; border-radius: 1px 1px 0 0; }
.ribtoggle { margin-left: 16px; }

.ribbon { display: flex; height: 69px; flex: none; background: linear-gradient(#ececec, #9c9c9c); border-top: 1px solid #ddd; border-right: 2px solid #eee; }
.panel { display: flex; flex-direction: column; background: #fdfdfd; border-right: 2px solid #dcdcdc; }
.p-sel { flex: 0 0 64px; }
.p-link { flex: 0 0 328px; }
.p-imp { flex: 0 0 223px; }
.p-load { flex: 0 0 98px; }
.tools { flex: 1; display: flex; align-items: flex-start; padding: 1px 0 1px 1px; }
.p-sel .tools { padding-left: 12px; }
.tool { display: flex; flex-direction: column; align-items: center; gap: 4px; position: relative; flex: none; height: 53px; padding: 2px 0 0; text-align: center; white-space: nowrap; color: #333; }
.tool svg { width: 24px; height: 24px; }
.tool.pressed { width: 42px; padding-top: 1px; background: linear-gradient(#c8e0f5, #a9cdee); border: 1px solid #5c9ed8; }
.w32 { width: 32px; }
.w36 { width: 36px; }
.w38 { width: 38px; }
.w42 { width: 42px; }
.w54 { width: 54px; }
.w68 { width: 68px; }
.w82 { width: 82px; }
.corner { position: absolute; right: 0; bottom: 12px; }
.panel footer { height: 13px; line-height: 12px; text-align: center; background: #efefef; border-top: 1px solid #e0e0e0; position: relative; white-space: nowrap; }
.launch { position: absolute; right: 3px; top: 4px; width: 6px; height: 6px; }
.t6 { font: 700 7px "Liberation Sans", sans-serif; fill: #3e4852; }
.t6.inv { fill: #fff; }
.options { height: 22px; flex: none; border-bottom: 1px solid #888; border-top: 1px solid #eee; }

.work { flex: 1; display: flex; min-height: 0; }
.side { width: 165px; flex: none; display: flex; flex-direction: column; background: #f0f0f0; border-right: 4px solid #e3e5e8; color: #111; }
.dock { display: flex; align-items: center; height: 13px; background: #bfcddb; padding: 0 3px; }
.dock h2 { flex: 1; min-width: 0; font-size: 8px; font-weight: 700; white-space: nowrap; }
.props { flex: none; padding-bottom: 4px; }
.type { display: flex; align-items: center; width: 100%; height: 54px; margin: 1px 0; padding: 2px; border: 1px solid #aaa; border-top-color: #666; background: #f6f6f6; text-align: left; color: #333; }
.thumb { width: 49px; height: 48px; border: 1px solid #d0d0d0; display: flex; align-items: center; justify-content: center; }
.tname { flex: 1; padding-left: 3px; line-height: 12px; }
.inst { display: flex; height: 17px; padding-left: 2px; }
.pick { position: relative; display: flex; }
.pick select { appearance: none; width: 100%; padding: 0 12px 0 3px; border: 1px solid #bbb; background: #e6e6e6; }
.pick::after { content: ""; position: absolute; right: 5px; top: 5px; width: 4px; height: 4px; border: solid #777; border-width: 0 1px 1px 0; rotate: 45deg; }
.inst .pick { width: 93px; }
.inst button { display: flex; align-items: center; gap: 3px; padding-left: 4px; }
.gridwrap { display: flex; height: 118px; overflow: hidden; margin-top: 1px; }
.grid { flex: 1; table-layout: fixed; border-collapse: collapse; margin-left: 1px; height: 118px; background: #fff; }
.grid th, .grid td { height: 13px; padding: 0 0 0 2px; font-weight: 400; text-align: left; white-space: nowrap; line-height: 12px; border: 1px solid #d0d0d0; border-top: 0; overflow: hidden; }
.grid th { background: #dcdcdc; color: #333; }
.grid th svg { float: right; width: 6px; height: 8px; margin: 2px 3px 0 0; }
.grid td:first-child { width: 69px; padding-left: 5px; }
.grid td:nth-child(2) { width: 68px; padding-left: 1px; }
.grid td:last-child { width: 9px; padding: 0; }
.grid input { display: block; width: 100%; height: 11px; border: 1px solid #222; padding: 0 3px; }
.grid button { display: block; width: 100%; height: 11px; line-height: 9px; background: #e2e2e2; border: 1px solid #a8a8a8; }
.grid .off { color: #888; }
.vscroll { width: 14px; flex: none; display: flex; flex-direction: column; align-items: center; background: #f0f0f0; padding: 2px 0; gap: 2px; }
.vscroll svg { width: 8px; height: 8px; }
.vscroll svg:last-child { margin-top: auto; }
.thumbv { width: 10px; height: 22px; background: #cdcdcd; }
.short { height: 17px; }
.apply { display: flex; height: 18px; justify-content: space-between; align-items: center; padding: 1px 3px; }
.apply a { color: #1464c8; text-decoration: underline; }
.apply button { width: 54px; height: 15px; background: #ccc; color: #888; }
.nav { flex: 1; min-height: 0; display: flex; flex-direction: column; }
.treewrap { flex: 1; min-height: 0; display: flex; background: #fff; border-top: 2px solid #888; border-left: 1px solid #999; margin-top: 1px; }
.tree { flex: 1; min-width: 0; overflow: hidden; }
.tree li { display: flex; align-items: center; height: 13px; white-space: nowrap; position: relative; }
.tree li > svg { width: 7px; height: 7px; }
.tree li > svg.vi { width: 12px; height: 12px; margin: 0 3px 0 5px; }
.tree i { width: 7px; height: 1px; margin: 0 2px 0 0; background: #ccc; }
.tree .sel { background: #e6e6e6; padding: 0 2px; }
.l0 { padding-left: 3px; }
.l1 { padding-left: 18px; }
.l2 { padding-left: 33px; }
.l3 { padding-left: 47px; }
.l4 { padding-left: 65px; }
.tree .l4 i { width: 10px; height: 7px; margin: -6px 2px 0 0; background: none; border: solid #ccc; border-width: 0 0 1px 1px; }
.tree .l1::before, .tree .l2::before, .tree .l3::before, .tree .l4::before { content: ""; position: absolute; left: 6px; top: 0; bottom: 0; width: 1px; background: #ddd; }
.tree .l2::after, .tree .l3::after, .tree .l4::after { content: ""; position: absolute; left: 21px; top: 0; bottom: 0; width: 1px; background: #ddd; }
.hscroll { display: flex; align-items: center; height: 13px; padding: 1px 16px 1px 3px; gap: 3px; }
.hscroll svg { width: 8px; height: 8px; }
.hscroll svg:last-child { margin-left: auto; }
.hscroll i { width: 53px; height: 10px; background: #cdcdcd; }

.view { flex: 1; min-width: 0; display: flex; flex-direction: column; border-left: 1px solid #666; background: #f0f0f0; }
.viewtop { flex: 1; min-height: 0; display: flex; }
.stage { flex: 1; min-width: 0; position: relative; background: #000; overflow: hidden; }
.drawing { width: 100%; height: 100%; font-family: "Liberation Sans", sans-serif; }
.elev { font-size: 12px; fill: #999; }
.lvl { font-size: 18px; fill: #eee; }
.lvl tspan { font-weight: 700; }
.lvlr { font-size: 20px; fill: #eee; text-anchor: end; }
.mdi { position: absolute; right: 4px; top: 5px; }
.navbar { position: absolute; right: 1px; top: 22px; }
.t2d { font: 700 6px "Liberation Sans", sans-serif; fill: #2b5b8f; }
.vscroll.main { padding: 3px 1px 4px; }
.mid { width: 12px; height: 13px; margin-top: 170px; }
.viewbar { height: 14px; flex: none; display: flex; align-items: center; }
.scale { width: 57px; padding-left: 18px; }
.vicons { display: flex; gap: 1px; }
.vicons svg { width: 14px; height: 12px; fill: none; stroke: #454e58; }
.htrack { flex: 1; height: 11px; display: flex; justify-content: center; }
.htrack i { width: 13px; background: #cdcdcd; }
.harrow { margin-right: 4px; }

.status { height: 18px; flex: none; display: flex; align-items: center; gap: 1px; background: linear-gradient(#dedede, #c9c9c9); border-top: 1px solid #999; color: #111; overflow: hidden; }
.status p { padding-left: 2px; flex: none; white-space: nowrap; }
.status svg { width: 14px; height: 14px; fill: none; }
.status .pick { height: 15px; }
.status .pick select { background: #fff; color: #777; border-color: #ddd; padding-left: 2px; }
.ws { width: 150px; }
.dm { width: 115px; margin-left: 2px; }
.cell { display: flex; align-items: center; justify-content: center; background: #d2d2d2; height: 16px; }
span.cell { width: 40px; padding-right: 8px; }
.sq { width: 18px; margin-left: 1px; }
.sels { margin-left: auto; padding-right: 47px; display: flex; gap: 1px; }
.sels .cell { width: 18px; }
.flt { display: flex; align-items: center; margin-left: 1px; }

.taskbar { height: 29px; flex: none; display: flex; align-items: stretch; background: #47201f; color: #fff; }
.start { width: 35px; display: flex; align-items: center; justify-content: center; }
.search { width: 252px; flex: none; display: flex; align-items: center; gap: 8px; padding-left: 9px; background: #f1f1f1; color: #444; border-bottom: 1px solid #aaa; }
.search input { flex: 1; min-width: 0; font-size: 11px; }
.search input::placeholder { color: #333; opacity: 1; }
.pins { display: flex; }
.pins button { width: 34px; display: flex; align-items: center; justify-content: center; }
.pins svg, .tasks svg { width: 18px; height: 18px; }
.tasks { display: flex; gap: 5px; }
.tasks button { width: 77px; display: flex; align-items: center; gap: 4px; padding-left: 3px; border-bottom: 2px solid #e98b90; white-space: nowrap; }
.tasks .cur { background: #704b4b; width: 82px; padding-left: 6px; }
.tasks span { flex: 1; text-align: left; }
.tray { margin-left: auto; display: flex; align-items: center; gap: 3px; padding-right: 7px; text-align: center; }
.tray svg { width: 14px; height: 14px; fill: none; stroke: #eee; }
.tray .chev { margin-left: 12px; }
.tray .kb { width: 18px; height: 12px; margin: 0 6px 0 2px; }
.tray time { margin-left: 9px; width: 44px; line-height: 13px; white-space: nowrap; }
```
